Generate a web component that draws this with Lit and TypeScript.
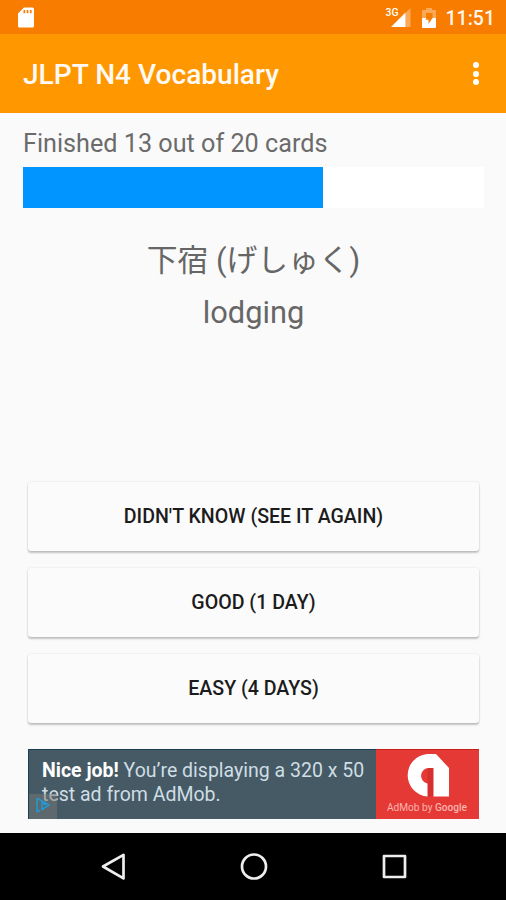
import { LitElement, html, css } from "lit";
import { customElement, property } from "lit/decorators.js";

@customElement("status-bar")
class StatusBar extends LitElement {
  static styles = css`
    :host { display: flex; align-items: center; height: 34px; background: #f77c00; color: #fff; padding: 0 11px 0 17px; box-sizing: border-box; }
    svg { display: block; flex: none; }
    .grow { flex: 1; }
    .signal { margin-right: 11px; }
    .g3 { font: 500 10.500px Roboto, sans-serif; fill: #fff; }
    .time { font: 500 19.500px/34px Roboto, sans-serif; margin-left: 10px; padding-top: 2px; height: 32px; line-height: 33px; color: #fff5ea; }
  `;
  render() {
    return html`
      <svg width="18" height="34" viewBox="0 0 18 34">
        <path fill="#fff" d="M7 7.5h8.5q1.5 0 1.5 1.5v17q0 1.5-1.5 1.5h-13q-1.5 0-1.5-1.500V13.500z" />
        <path fill="#f77c00" d="M6.500 10h1.700v3.300H6.500zM9.700 10h1.700v3.300H9.700zM12.900 10h1.700v3.300h-1.700z" />
      </svg>
      <span class="grow"></span>
      <svg class="signal" width="26" height="34" viewBox="0 0 26 34">
        <path fill="#fff" fill-opacity=".35" d="M20.500 13l5-5v19h-5z" />
        <path fill="#fff" d="M6 27L20.500 12.500V27z" />
        <text class="g3" x="0.500" y="16" textLength="13" lengthAdjust="spacingAndGlyphs">3G</text>
      </svg>
      <svg width="14" height="34" viewBox="0 0 14 34">
        <path fill="#fff" fill-opacity=".35" d="M0 18V11q0-1 1-1h3V8h6v2h3q1 0 1 1v7h-3.500V13H4v5z" />
        <path fill="#fff" d="M0 18h4.500L3.500 19.800h3v4.200L10.500 18H14v9q0 1-1 1H1q-1 0-1-1z" />
      </svg>
      <span class="time">11:51</span>
    `;
  }
}

@customElement("tool-bar")
class ToolBar extends LitElement {
  static styles = css`
    :host { display: flex; align-items: center; justify-content: space-between; height: 79px; background: #ff9800; padding: 0 27px 0 23px; box-sizing: border-box; }
    .title { font: 500 28.100px/36px Roboto, sans-serif; color: #fffaf3; white-space: nowrap; padding-top: 2px; }
    .more { display: flex; flex-direction: column; gap: 2.4px; }
    .dot { width: 6px; height: 6px; border-radius: 50%; background: #fff; }
  `;
  render() {
    return html`
      <span class="title">JLPT N4 Vocabulary</span>
      <span class="more"><i class="dot"></i><i class="dot"></i><i class="dot"></i></span>
    `;
  }
}

@customElement("study-progress")
class StudyProgress extends LitElement {
  @property({ type: Number }) done = 0;
  @property({ type: Number }) total = 1;
  static styles = css`
    :host { display: block; }
    .label { font: 400 25.200px/32px Roboto, sans-serif; color: #6b6b6b; white-space: nowrap; padding-top: 1px; }
    .track { height: 41px; margin-top: 7px; background: #fff; }
    .fill { height: 100%; background: #0095ff; }
  `;
  render() {
    return html`
      <div class="label">Finished ${this.done} out of ${this.total} cards</div>
      <div class="track"><div class="fill" style="width:${(this.done / this.total) * 100}%"></div></div>
    `;
  }
}

@customElement("ad-banner")
class AdBanner extends LitElement {
  static styles = css`
    :host { display: flex; height: 70px; position: relative; }
    .copy { flex: 1; background: #455a64; box-shadow: inset 1px 1px 0 #173e54; color: #cfdde4; padding: 10px 0 0 14px; font: 400 19.500px/23.500px Roboto, sans-serif; white-space: nowrap; }
    .strong { color: #fff; font-weight: 700; }
    .brand { width: 103px; background: #e53935; box-shadow: inset 0 1px 0 #c81e1c; }
    .brand svg { display: block; }
    .by { font: 400 10.500px Roboto, sans-serif; fill: #fbb3ae; }
    .google { font-weight: 500; }
    .choices { position: absolute; left: 1px; bottom: 0; width: 28px; height: 25px; background: rgba(120, 120, 120, 0.5); }
  `;
  render() {
    return html`
      <div class="copy"><span class="strong">Nice job!</span> You’re displaying a 320 x 50<br />test ad from AdMob.</div>
      <div class="brand">
        <svg width="103" height="70" viewBox="0 0 103 70">
          <path fill="#c62828" fill-opacity=".5" d="M51.500 19h6v28.500h-6z" />
          <path fill="#fff" d="M51.500 5H60L73 19V47.500H57.500V19H52a7.900 7.900 0 0 0-.5 15.600V47.500A21.300 21.300 0 0 1 51.500 5z" />
          <text class="by" x="11" y="62" textLength="80" lengthAdjust="spacingAndGlyphs">AdMob by <tspan class="google">Google</tspan></text>
        </svg>
      </div>
      <svg class="choices" viewBox="0 0 28 25">
        <path fill="none" stroke="#2498cf" stroke-width="1.600" stroke-linejoin="round" d="M11 16l-2 1.500q-1 .5-1-1V5.500q0-1.500 1-.8L20 11l-7 4.500V8.500l4 2.500" />
      </svg>
    `;
  }
}

@customElement("nav-bar")
class NavBar extends LitElement {
  static styles = css`
    :host { display: flex; justify-content: center; align-items: center; gap: 112px; height: 67px; padding-left: 1px; box-sizing: border-box; background: #000; }
    svg { display: block; }
    path, circle, rect { fill: none; stroke: #eee; stroke-width: 2.700; stroke-linejoin: round; }
  `;
  render() {
    return html`
      <svg width="28" height="28" viewBox="0 0 28 28"><path d="M3 13.500L23.500 1.800V25.400z" /></svg>
      <svg width="28" height="28" viewBox="0 0 28 28"><circle cx="14" cy="13.500" r="12" /></svg>
      <svg width="28" height="28" viewBox="0 0 28 28"><rect x="4" y="3" width="21" height="21" /></svg>
    `;
  }
}

@customElement("app-root")
class AppRoot extends LitElement {
  static styles = css`
    :host { display: flex; flex-direction: column; width: 506px; height: 900px; background: #fafafa; overflow: hidden; }
    .body { flex: 1; display: flex; flex-direction: column; padding: 14px 22px 14px 23px; }
    .card { text-align: center; color: #666; font: 400 30.800px/52px Roboto, "Noto Sans CJK JP", sans-serif; padding-top: 27px; }
    .line { height: 52px; white-space: nowrap; }
    .actions { margin-top: auto; display: flex; flex-direction: column; gap: 17px; padding: 0 5px; }
    .btn { height: 69px; border: 0; padding: 1px 0 0; border-radius: 3px; background: #fbfbfb; box-shadow: 0 2px 2px rgba(0, 0, 0, 0.22), 0 0 2px rgba(0, 0, 0, 0.12); color: #1c1c1c; font: 500 19.600px/24px Roboto, sans-serif; }
    .ad { margin: 26px 5px 0; }
  `;
  private answers = ["DIDN'T KNOW (SEE IT AGAIN)", "GOOD (1 DAY)", "EASY (4 DAYS)"];
  render() {
    return html`
      <status-bar></status-bar>
      <tool-bar></tool-bar>
      <main class="body">
        <study-progress .done=${13} .total=${20}></study-progress>
        <div class="card">
          <div class="line">下宿 (げしゅく)</div>
          <div class="line">lodging</div>
        </div>
        <div class="actions">${this.answers.map((a) => html`<button class="btn">${a}</button>`)}</div>
        <ad-banner class="ad"></ad-banner>
      </main>
      <nav-bar></nav-bar>
    `;
  }
}
